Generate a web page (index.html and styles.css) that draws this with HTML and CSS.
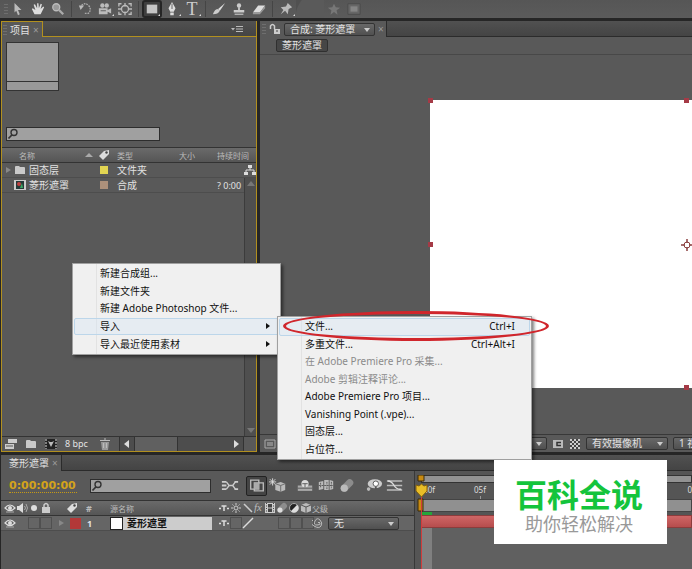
FILE: index.html
```
<!DOCTYPE html>
<html lang="zh-CN">
	<head>
		<meta charset="utf-8" />
		<title>菱形遮罩</title>
		<link rel="stylesheet" href="styles.css">
	</head>
	<body>
		<svg class="sprite" aria-hidden="true">
			<symbol id="i-search" viewBox="0 0 12 12"><circle cx="7" cy="4.5" r="3" fill="none" stroke="#333" stroke-width="1.4"/><path d="M4.8 7L1.5 10.500" stroke="#333" stroke-width="1.8"/></symbol>
			<symbol id="i-tag" viewBox="0 0 12 12"><path d="M1 7L6 2l5-1v4L5 11z" fill="#ddd"/><circle cx="8.500" cy="3.500" r="1.200" fill="#444"/></symbol>
			<symbol id="i-folder" viewBox="0 0 12 12"><path d="M1 3q0-1 1-1h3l1 1h4q1 0 1 1v6H1z" fill="#c9c9c9"/></symbol>
			<symbol id="i-eye" viewBox="0 0 12 12"><path d="M1 6q5-6 10 0q-5 5-10 0z" fill="none" stroke="#ddd" stroke-width="1.200"/><circle cx="6" cy="6" r="2" fill="#ddd"/><path d="M2 10h8" stroke="#aaa"/></symbol>
			<symbol id="i-shy" viewBox="0 0 12 12"><path d="M1 6.500h2m6 0h2M3.500 4h5M6 4v5" stroke="#ddd" stroke-width="1.500"/></symbol>
			<symbol id="i-cube" viewBox="0 0 12 12"><path d="M1 3l5-2 5 2v6l-5 2-5-2z" fill="#bbb"/><path d="M1 3l5 2 5-2M6 5v6" fill="none" stroke="#555"/></symbol>
			<symbol id="i-blur" viewBox="0 0 12 12"><path d="M4 8L8 4" stroke="#8d8d8d" stroke-width="6" stroke-linecap="round"/><circle cx="4" cy="8" r="2.500" fill="#ddd"/></symbol>
			<symbol id="i-film" viewBox="0 0 12 12"><path d="M1 1h10v10H1z" fill="#ccc"/><path d="M4 2h4v3.500H4zM4 6.500h4V10H4z" fill="#444"/><path d="M2.500 1v10m7-10v10" stroke="#444" stroke-dasharray="1 1.500"/></symbol>
		</svg>

		<header class="toolbar" role="toolbar" aria-label="工具">
			<i class="grip"></i>
			<button aria-label="选取"><svg viewBox="0 0 16 16"><path d="M4 1l8 8H8l2 5-2 1-2-5-2 2z" fill="#bbb"/></svg></button>
			<button aria-label="手形"><svg viewBox="0 0 16 16"><path d="M4 14L1 8l1-1 3 2L3 3l1.500-.5L7 7l0-5.500h1.500L9 7l2-5 1.500.5L11 8l3-3 1 1-4 8z" fill="#ddd"/></svg></button>
			<button aria-label="缩放"><svg viewBox="0 0 16 16"><circle cx="6" cy="6" r="4" fill="#999" stroke="#bbb" stroke-width="1.500"/><path d="M9 9l5 5" stroke="#aaa" stroke-width="2.500"/></svg></button>
			<i class="divider"></i>
			<button aria-label="旋转"><svg viewBox="0 0 16 16"><path d="M4 4q4-4 8 0t0 9H7" fill="none" stroke="#aaa" stroke-width="1.500" stroke-dasharray="2 1"/><path d="M1 4l6 0-4 5z" fill="#bbb"/></svg></button>
			<button class="more" aria-label="摄像机"><svg viewBox="0 0 16 16"><circle cx="5" cy="4" r="2.500" fill="#bbb"/><circle cx="10" cy="4" r="2.500" fill="#bbb"/><path d="M1 7h10v7H1zM11 9l4-2v6l-4-2z" fill="#bbb"/><path d="M3 10h6" stroke="#555"/></svg></button>
			<button aria-label="定位点"><svg viewBox="0 0 16 16"><circle cx="8" cy="8" r="4" fill="none" stroke="#bbb" stroke-width="1.500"/><path d="M1 5V2h3m8 0h3v3m0 6v3h-3M4 14H1v-3M0 8h4m8 0h4M8 1v4m0 6v4" fill="none" stroke="#bbb" stroke-width="1.500"/></svg></button>
			<i class="divider"></i>
			<button class="more is-active" aria-label="矩形遮罩"><svg viewBox="0 0 16 16"><path d="M2 3h12v10H2z" fill="#c4c4c4"/></svg></button>
			<button class="more" aria-label="钢笔"><svg viewBox="0 0 16 16"><path d="M8 0l4 7-2 4H6L4 7zM6 12h4v3H6z" fill="#ddd"/><path d="M8 2v6" stroke="#555"/></svg></button>
			<button class="more type-tool" aria-label="文字">T</button>
			<i class="divider"></i>
			<button aria-label="画笔"><svg viewBox="0 0 16 16"><path d="M15 1L7 8l2 2z" fill="#ddd"/><path d="M7 8q-4 0-6 6 6 0 8-4z" fill="#ccc"/></svg></button>
			<button aria-label="图章"><svg viewBox="0 0 16 16"><circle cx="8" cy="4" r="2.500" fill="#ccc"/><path d="M7 6h2v3h5v3H2V9h5z" fill="#ccc"/><path d="M3 14h10" stroke="#bbb" stroke-width="1.500"/></svg></button>
			<button aria-label="橡皮擦"><svg viewBox="0 0 16 16"><path d="M1 12l6-8h8l-6 8z" fill="#ddd"/><path d="M1 12h8l6-8v3l-6 7H1z" fill="#999"/></svg></button>
			<i class="divider"></i>
			<button class="more" aria-label="木偶"><svg viewBox="0 0 16 16"><path d="M2 6l6-1 2-4 5 5-4 2-1 6-3-4-5 4 3-5z" fill="#bbb"/></svg></button>
			<i class="curve"></i>
			<button disabled aria-label="收藏"><svg viewBox="0 0 16 16"><path d="M8 2l2 4 5 .5-4 3 1 5-4-3-4 3 1-5-4-3L6 6z" fill="#777"/></svg></button>
			<button disabled aria-label="边框"><svg viewBox="0 0 16 16"><path d="M1 2h14v12H1z" fill="#666" stroke="#494949"/><path d="M4 5h8v6H4z" fill="#858585"/></svg></button>
		</header>

		<main class="workspace">
			<section class="panel project" aria-label="项目">
				<div class="tabs">
					<h2 class="tab"><i class="grip"></i>项目<button class="close" aria-label="关闭">×</button></h2>
					<button class="panel-menu" aria-label="面板菜单"><svg viewBox="0 0 12 12"><path d="M0 5h4L2 7.500z" fill="#bbb"/><path d="M5 3.500h7M5 6h7M5 8.500h7" stroke="#bbb"/></svg></button>
				</div>
				<div class="project-top">
					<div class="thumb"></div>
					<label class="search"><svg><use href="#i-search"/></svg><input type="text" aria-label="搜索项目"></label>
				</div>
				<div class="project-list">
					<table class="items">
						<colgroup><col class="c-name"><col class="c-tag"><col class="c-type"><col class="c-size"><col></colgroup>
						<thead>
							<tr><th>名称<i class="sort"></i></th><th><svg class="icon"><use href="#i-tag"/></svg></th><th>类型</th><th>大小</th><th>持续时间</th></tr>
						</thead>
						<tbody>
							<tr>
								<td><span class="item"><i class="twirl"></i><svg class="icon"><use href="#i-folder"/></svg>固态层</span></td>
								<td><i class="swatch yellow"></i></td><td>文件夹</td><td></td>
								<td><svg class="flow" viewBox="0 0 12 12"><path d="M4 1h4v3H4zM0 8h4v3H0zM8 8h4v3H8z" fill="#ddd"/><path d="M6 4v2M2 8V6h8v2" fill="none" stroke="#ddd"/></svg></td>
							</tr>
							<tr>
								<td><span class="item"><i class="twirl blank"></i><svg class="icon" viewBox="0 0 12 12"><path d="M0 1h12v10H0z" fill="#ccc"/><path d="M2 2h8v8H2z" fill="#253a39"/><circle cx="5" cy="5" r="2" fill="#c14040"/><path d="M6 9l2-5 1 5z" fill="#3aa763"/></svg>菱形遮罩</span></td>
								<td><i class="swatch tan"></i></td><td>合成</td><td></td><td class="time">? 0:00</td>
							</tr>
						</tbody>
					</table>
					<i class="scrollbar"></i>
				</div>
				<footer class="project-foot">
					<button aria-label="解释素材"><svg viewBox="0 0 12 12"><path d="M3 1h9v4H3zM0 6h9v5H0z" fill="#ccc"/><path d="M1 8h7" stroke="#555"/></svg></button>
					<button aria-label="新建文件夹"><svg><use href="#i-folder"/></svg></button>
					<button aria-label="新建合成"><svg viewBox="0 0 12 12"><path d="M0 1h12v10H0z" fill="#222"/><path d="M1 1v10M11 1v10" stroke="#ddd" stroke-dasharray="2 1"/><path d="M3 3l3 6 3-6-2 1H5z" fill="#bbb"/></svg></button>
					<button class="bpc">8 bpc</button>
					<button aria-label="删除"><svg viewBox="0 0 12 12"><path d="M2 4h8l-1 8H3z" fill="#999"/><path d="M1 2.500h10M5 1h2M4.500 5v5m3-5v5" stroke="#bbb"/></svg></button>
					<div class="hscroll"><i class="arrow left"></i><i class="knob"></i><i class="arrow right"></i></div>
				</footer>
			</section>

			<section class="panel viewer" aria-label="合成">
				<div class="tabs">
					<div class="tab">
						<i class="grip"></i>
						<svg class="icon" viewBox="0 0 12 12"><path d="M5 6h6v5H5z" fill="#ccc"/><path d="M1.500 6V3q2-3 4 0v3" fill="none" stroke="#ccc" stroke-width="1.500"/><path d="M8 7v2" stroke="#444"/></svg>
						<span class="drop comp-drop"><select aria-label="合成"><option>合成: 菱形遮罩</option></select></span>
						<button class="close" aria-label="关闭">×</button>
					</div>
				</div>
				<nav class="crumbs"><button>菱形遮罩</button></nav>
				<div class="canvas">
					<div class="frame">
						<i class="handle tl"></i><i class="handle tc"></i><i class="handle ml"></i><i class="handle bl"></i><i class="handle bc"></i>
						<svg class="anchor" viewBox="0 0 12 12"><circle cx="6" cy="6" r="3" fill="none" stroke="#8b4040"/><path d="M6 0v4M6 8v4M0 6h4M8 6h4" stroke="#8b4040" stroke-width="1.500"/></svg>
					</div>
				</div>
				<footer class="viewer-foot">
					<svg class="icon" viewBox="0 0 12 12"><path d="M1 2h10v8H1z" fill="none" stroke="#aaa"/><path d="M3 4h6v4H3z" fill="#888"/></svg>
					<span class="drop res-drop"><select aria-label="分辨率"><option></option></select></span>
					<button aria-label="目标区域"><svg viewBox="0 0 12 12"><path d="M1 2h10v8H1z" fill="#bbb"/><path d="M9 4.500H5v3h4" fill="none" stroke="#333" stroke-width="1.500"/></svg></button>
					<button aria-label="透明网格"><svg viewBox="0 0 12 12"><path d="M1 1h10v10H1z" fill="#444"/><path d="M1 2h10m-10 4h10m-10 4h10" stroke="#ccc" stroke-width="2" stroke-dasharray="2 2"/><path d="M3 4h8m-8 4h8" stroke="#ccc" stroke-width="2" stroke-dasharray="2 2"/></svg></button>
					<span class="drop cam-drop"><select aria-label="视图"><option>有效摄像机</option></select></span>
					<span class="drop view-drop"><select aria-label="视图数"><option>1 视图</option></select></span>
				</footer>
			</section>
		</main>

		<section class="panel timeline" aria-label="时间线">
			<div class="tabs">
				<h2 class="tab">菱形遮罩<button class="close" aria-label="关闭">×</button></h2>
			</div>
			<div class="timeline-body">
				<div class="layers">
					<div class="controls">
						<button class="timecode">0:00:00:00</button>
						<label class="search"><svg><use href="#i-search"/></svg><input type="text" aria-label="搜索图层"></label>
						<div class="modes">
							<button aria-label="流程图"><svg viewBox="0 0 20 16"><path d="M1 3h5v2H1zM1 7h5v2H1zM1 11h5v2H1zM15 3h4v2h-4zM15 11h4v2h-4z" fill="#ccc"/><path d="M6 4l3 4h4l3-4M9 8l-3 4m7-4l3 4" fill="none" stroke="#ccc" stroke-width="1.500"/></svg></button>
							<button class="is-active" aria-label="实时更新"><svg viewBox="0 0 20 16"><path d="M3 2h9v10H3zM7 5h10v9H7z" fill="none" stroke="#bbb" stroke-width="1.500"/><path d="M7 5h5v7H7z" fill="#aaa"/></svg></button>
							<button aria-label="草图 3D"><svg viewBox="0 0 20 16"><path d="M7 6l6-2 5 2v7l-5 2-6-2z" fill="#bbb"/><path d="M7 6l6 2 5-2m-5 2v7" fill="none" stroke="#666"/><path d="M4 0v8M0 4h8M1 1l6 6M7 1L1 7" stroke="#ddd"/></svg></button>
							<button class="gap" aria-label="隐藏图层"><svg viewBox="0 0 20 16"><path d="M2 8h16v6H2z" fill="#aaa"/><circle cx="10" cy="6" r="4" fill="#ddd"/><path d="M7 6h6M10 6v4M2 11h16" stroke="#555"/></svg></button>
							<button aria-label="帧混合"><svg viewBox="0 0 20 16"><path d="M2 4l5-1v9l-5 1zM8 2h5v11H8zM14 2l4 1v9l-4 1z" fill="#bbb"/><path d="M4 5v6m7-7v8m5-8v7M2 8h16" stroke="#555" stroke-dasharray="2 1"/></svg></button>
							<button aria-label="运动模糊"><svg viewBox="0 0 20 16"><path d="M7 11l6-6" stroke="#8c8c8c" stroke-width="8" stroke-linecap="round"/><circle cx="7" cy="11" r="4" fill="#bbb"/></svg></button>
							<button class="gap" aria-label="头脑风暴"><svg viewBox="0 0 20 16"><ellipse cx="11" cy="6" rx="8" ry="5" fill="#ccc"/><circle cx="4" cy="12" r="2" fill="#bbb"/><circle cx="12" cy="6" r="3" fill="#fff" stroke="#555"/><path d="M11 9h2v3h-2z" fill="#555"/></svg></button>
							<button aria-label="图形编辑器"><svg viewBox="0 0 20 16"><path d="M1 3h17M1 8h17M1 13h17" stroke="#bbb" stroke-width="1.500"/><path d="M2 3q4 0 7 5t8 4" fill="none" stroke="#ddd" stroke-width="1.500"/></svg></button>
						</div>
					</div>
					<table class="layer-table">
						<colgroup><col class="l-av"><col class="l-label"><col class="l-name"><col class="l-switch"><col></colgroup>
						<thead>
							<tr>
								<th><span class="cells"><svg><use href="#i-eye"/></svg><svg viewBox="0 0 12 12"><path d="M1 4h2l4-3v10L3 8H1z" fill="#ddd"/><path d="M8.500 4q2 2 0 4M10 2q3 4 0 8" fill="none" stroke="#aaa"/></svg><svg viewBox="0 0 12 12"><circle cx="6" cy="6" r="3" fill="#ddd"/></svg><svg viewBox="0 0 12 12"><path d="M2 5h8v6H2z" fill="#ccc"/><path d="M4 5V3q2-3 4 0v2" fill="none" stroke="#ccc" stroke-width="1.500"/></svg></span></th>
								<th><span class="cells label-cells"><svg><use href="#i-tag"/></svg><b>#</b></span></th>
								<th>源名称</th>
								<th><span class="cells"><svg><use href="#i-shy"/></svg><svg viewBox="0 0 12 12"><circle cx="6" cy="6" r="2" fill="none" stroke="#ccc"/><path d="M6 1v2m0 6v2M1 6h2m6 0h2M2.500 2.500l1 1m5 5l1 1m0-7l-1 1m-5 5l-1 1" stroke="#ccc"/></svg><svg viewBox="0 0 12 12"><path d="M2 2l8 8" stroke="#ccc" stroke-width="1.500"/></svg><em>fx</em><svg><use href="#i-film"/></svg><svg><use href="#i-blur"/></svg><svg viewBox="0 0 12 12"><circle cx="6" cy="6" r="4.500" fill="#222" stroke="#aaa"/><path d="M9.200 2.800L2.800 9.200A4.500 4.500 0 0 0 9.200 2.800z" fill="#ddd"/></svg><svg><use href="#i-cube"/></svg></span></th>
								<th>父级</th>
							</tr>
						</thead>
						<tbody>
							<tr>
								<td><span class="cells"><svg><use href="#i-eye"/></svg><i class="blank"></i><i class="box"></i><i class="box"></i></span></td>
								<td><span class="cells layer-label"><i class="twirl"></i><i class="swatch red"></i><b>1</b></span></td>
								<td><span class="layer-name"><i class="solid"></i><strong>菱形遮罩</strong></span></td>
								<td><span class="cells"><svg><use href="#i-shy"/></svg><i class="box"></i><svg viewBox="0 0 12 12"><path d="M1 11L11 1" stroke="#ddd" stroke-width="1.500"/></svg><i class="blank"></i><i class="blank"></i><i class="box"></i><i class="box"></i><i class="box"></i></span></td>
								<td><span class="parent"><svg viewBox="0 0 12 12"><path d="M6 6q1-2 2 0t-3 2-2-4 5-1 1 6-7 0-1-6" fill="none" stroke="#bbb"/></svg><span class="drop parent-drop"><select aria-label="父级"><option>无</option></select></span></span></td>
							</tr>
						</tbody>
					</table>
				</div>
				<div class="time-area">
					<div class="navigator"></div>
					<div class="ruler"><span>:00f</span><span class="tick">05f</span><span class="last">0</span></div>
					<div class="work-area"></div>
					<div class="cache"></div>
					<div class="bar"></div>
					<div class="track"></div>
					<svg class="playhead" viewBox="0 0 13 94" preserveAspectRatio="xMidYMin slice"><path d="M3 0h6v6H3zM3 24h5v12H3z" fill="#c78a12" stroke="#3a2a08"/><path d="M6.500 20v74" stroke="#d23c3c"/><path d="M1 10l3 1 2.500-2L9 11l3-1v6l-5.500 6L1 16z" fill="#e8bd26" stroke="#805f10"/></svg>
				</div>
			</div>
		</section>

		<div class="menu menu-main" role="menu">
			<button role="menuitem">新建合成组...</button>
			<button role="menuitem">新建文件夹</button>
			<button role="menuitem">新建 Adobe Photoshop 文件...</button>
			<button role="menuitem" class="hover sub">导入</button>
			<button role="menuitem" class="sub">导入最近使用素材</button>
		</div>
		<div class="menu menu-import" role="menu">
			<button role="menuitem" class="hover">文件...<kbd>Ctrl+I</kbd></button>
			<button role="menuitem">多重文件...<kbd>Ctrl+Alt+I</kbd></button>
			<button role="menuitem" disabled>在 Adobe Premiere Pro 采集...</button>
			<button role="menuitem" disabled>Adobe 剪辑注释评论...</button>
			<button role="menuitem">Adobe Premiere Pro 项目...</button>
			<button role="menuitem">Vanishing Point (.vpe)...</button>
			<button role="menuitem">固态层...</button>
			<button role="menuitem">占位符...</button>
		</div>
		<div class="marker"></div>
		<aside class="brand"><strong>百科全说</strong><span>助你轻松解决</span></aside>
	</body>
</html>
```
FILE: styles.css
```
html, body {
	margin: 0;
	height: 100%;
	overflow: hidden;
}
*, *::before, *::after {
	box-sizing: border-box;
}
body {
	display: flex;
	flex-direction: column;
	gap: 3px;
	background: #262626;
	color: #e2e2e2;
	font: 10px/14px "Noto Sans", "Noto Sans CJK SC", sans-serif;
}
button, input, select {
	margin: 0;
	padding: 0;
	border: 0;
	background: none;
	color: inherit;
	font: inherit;
}
svg, i {
	display: block;
	flex: none;
}
.sprite {
	position: absolute;
	width: 0;
	height: 0;
}
.icon {
	width: 12px;
	height: 12px;
}
.grip {
	width: 4px;
	height: 12px;
	background: radial-gradient(#888 30%, transparent 40%) 0 0 / 2px 3px;
}

/* toolbar */
.toolbar {
	display: flex;
	align-items: center;
	flex: none;
	height: 18px;
	padding-left: 4px;
	background: linear-gradient(#565656, #5b5b5b);
}
.toolbar button {
	position: relative;
	flex: none;
	width: 20px;
	height: 18px;
}
.toolbar svg {
	width: 14px;
	height: 14px;
	margin: 0 auto;
}
.toolbar .divider {
	width: 1px;
	height: 16px;
	margin: 0 3px;
	background: #454545;
}
.toolbar .more::after {
	content: "";
	position: absolute;
	right: 1px;
	bottom: 2px;
	border: 1px solid #ddd;
	border-top-color: transparent;
	border-left-color: transparent;
}
.toolbar .is-active {
	border: 2px solid #252525;
	border-radius: 3px;
	background: #3e3e3e;
}
.toolbar .is-active::after {
	right: 0;
	bottom: 0;
}
.toolbar .type-tool {
	font: 18px/18px "Liberation Serif", serif;
	color: #ccc;
}
.curve {
	width: 28px;
	height: 18px;
	background: radial-gradient(circle at 100% 100%, #5a5a5a 28px, #505050 29px);
}

/* panels */
.workspace {
	display: flex;
	flex: 1;
	gap: 3px;
	min-height: 0;
}
.panel {
	display: flex;
	flex-direction: column;
	background: #595959;
}
.tabs {
	display: flex;
	justify-content: space-between;
	flex: none;
	height: 16px;
	border-bottom: 1px solid #2b2b2b;
	background: linear-gradient(#515151, #444);
}
.tab {
	display: flex;
	align-items: center;
	gap: 3px;
	height: 16px;
	margin: 0;
	padding: 0 3px;
	border-right: 1px solid #2b2b2b;
	background: #595959;
	font-size: 10px;
	font-weight: 400;
}
.close {
	color: #999;
}
.drop {
	position: relative;
	display: block;
	height: 13px;
	border: 1px solid #333;
	border-radius: 2px;
	background: linear-gradient(#686868, #505050);
}
.drop::after {
	content: "";
	position: absolute;
	right: 4px;
	top: 4px;
	border: 3px solid transparent;
	border-top: 4px solid #ccc;
	border-bottom: 0;
	pointer-events: none;
}
.drop select {
	display: block;
	width: 100%;
	height: 11px;
	padding-left: 5px;
	line-height: 11px;
	appearance: none;
}
.search {
	display: flex;
	align-items: center;
	height: 14px;
	border: 1px solid #2d2d2d;
	background: #a0a0a0;
}
.search svg {
	width: 12px;
	height: 12px;
}
.search input {
	flex: 1;
	min-width: 0;
	height: 12px;
	outline: 0;
	color: #222;
}
.swatch {
	width: 8px;
	height: 8px;
}
.yellow { background: #e2d552; }
.tan { background: #ad917b; }
.red { background: #b33838; }
.twirl {
	width: 5px;
	border: 3px solid transparent;
	border-left: 5px solid #888;
	border-right: 0;
}
.twirl.blank {
	border-color: transparent;
}

/* project */
.project {
	flex: none;
	width: 256px;
	margin-left: 1px;
	border: 1px solid #b2901f;
	border-top: 0;
}
.project .tabs {
	border-bottom-color: #b2901f;
}
.project .tab {
	padding-left: 1px;
	border-top: 1px solid #b2901f;
	border-right-color: #b2901f;
}
.panel-menu {
	padding-right: 13px;
}
.panel-menu svg {
	width: 12px;
	height: 12px;
}
.project-top {
	flex: none;
	padding: 5px 4px 6px;
}
.thumb {
	width: 53px;
	height: 49px;
	border: 1px solid #333;
	background: linear-gradient(#999 38px, #333 38px, #333 39px, #999 39px);
}
.project-top .search {
	width: 154px;
	margin-top: 36px;
}
.project-list {
	display: flex;
	flex: 1;
	position: relative;
	align-items: flex-start;
	min-height: 0;
}
.items, .layer-table {
	width: 100%;
	table-layout: fixed;
	border-collapse: collapse;
}
.items th, .items td, .layer-table th, .layer-table td {
	height: 15px;
	padding: 0;
	text-align: left;
	font-weight: 400;
	line-height: 13px;
	white-space: nowrap;
	border-bottom: 1px solid #4d4d4d;
}
.items thead, .layer-table thead {
	background: linear-gradient(#6a6a6a, #545454);
	color: #bbb;
}
.items th, .layer-table th {
	font-size: 8px;
	border-top: 1px solid #333;
	border-bottom: 1px solid #333;
}
.items th:first-child {
	padding-left: 17px;
}
.sort {
	float: right;
	margin: 4px 5px;
	border: 4px solid transparent;
	border-bottom: 4px solid #aaa;
	border-top: 0;
}
.c-name { width: 96px; }
.c-tag { width: 19px; }
.c-type { width: 62px; }
.c-size { width: 38px; }
.items .swatch {
	margin-left: 2px;
}
.item {
	display: flex;
	align-items: center;
	gap: 3px;
	padding-left: 4px;
}
.items .time {
	font-size: 9px;
}
.flow {
	width: 12px;
	height: 12px;
	margin-left: 27px;
}
.scrollbar {
	position: absolute;
	top: 31px;
	right: 0;
	bottom: 0;
	width: 12px;
	border-left: 1px solid #3c3c3c;
	background: #4f4f4f;
}
.scrollbar::before, .scrollbar::after {
	content: "";
	position: absolute;
	left: 2px;
	top: 3px;
	border: 4px solid transparent;
	border-bottom: 5px solid #777;
	border-top: 0;
}
.scrollbar::after {
	top: auto;
	bottom: 3px;
	border-top: 5px solid #777;
	border-bottom: 0;
}
.project-foot {
	display: flex;
	align-items: center;
	gap: 8px;
	flex: none;
	height: 15px;
	padding-left: 3px;
	border-top: 1px solid #333;
}
.project-foot svg {
	width: 12px;
	height: 12px;
}
.bpc {
	width: 26px;
	font-size: 9px;
	text-align: left;
	white-space: nowrap;
}
.hscroll {
	display: flex;
	align-items: center;
	flex: 1;
	height: 14px;
	margin-right: 12px;
	padding: 0 4px;
	border: solid #333;
	border-width: 0 1px;
	background: #4d4d4d;
}
.arrow {
	border: 4px solid transparent;
}
.arrow.left {
	border-right: 5px solid #ddd;
	border-left: 0;
}
.arrow.right {
	margin-left: auto;
	border-left: 5px solid #ddd;
	border-right: 0;
}
.knob {
	width: 44px;
	height: 14px;
	margin-left: 5px;
	border: solid #333;
	border-width: 0 1px;
	background: #606060;
}

/* composition viewer */
.viewer {
	flex: 1;
	min-width: 0;
}
.viewer .tab {
	padding: 0 2px;
}
.comp-drop {
	width: 91px;
}
.crumbs {
	flex: none;
	height: 18px;
	padding: 2px 16px;
	border-bottom: 1px solid #484848;
}
.crumbs button {
	display: block;
	width: 52px;
	height: 13px;
	border: 1px solid #303030;
	border-radius: 2px;
	background: #464646;
	line-height: 11px;
}
.canvas {
	flex: 1;
	min-height: 0;
	padding: 45px 0 46px 170px;
}
.frame {
	position: relative;
	height: 100%;
	background: #fff;
}
.handle {
	position: absolute;
	width: 5px;
	height: 5px;
	background: #a53a46;
}
.tl { left: -2px; top: -2px; }
.tc { left: 254px; top: -2px; }
.ml { left: -2px; top: 142px; }
.bl { left: -2px; bottom: -2px; }
.bc { left: 254px; bottom: -2px; }
.anchor {
	position: absolute;
	left: 251px;
	top: 139px;
	width: 12px;
	height: 12px;
}
.viewer-foot {
	display: flex;
	align-items: center;
	gap: 5px;
	flex: none;
	height: 18px;
	padding-left: 4px;
	border-top: 1px solid #383838;
	overflow: hidden;
}
.viewer-foot button svg {
	width: 12px;
	height: 12px;
}
.viewer-foot .drop {
	flex: none;
}
.viewer-foot .res-drop {
	width: 266px;
}
.viewer-foot .cam-drop { width: 82px; }
.viewer-foot .view-drop { width: 60px; }

/* timeline */
.timeline {
	flex: none;
	height: 114px;
	margin-left: 1px;
}
.timeline .tab {
	padding-left: 8px;
}
.timeline-body {
	display: flex;
	flex: 1;
	min-height: 0;
}
.layers {
	flex: none;
	width: 414px;
	border-right: 1px solid #383838;
}
.controls {
	display: flex;
	align-items: center;
	height: 29px;
	padding-left: 8px;
}
.timecode {
	width: 68px;
	border-bottom: 1px dotted #c79a16;
	color: #d3a31b;
	font: bold 11px/13px "DejaVu Sans", sans-serif;
	text-align: left;
}
.controls .search {
	width: 121px;
	margin-left: 13px;
}
.modes {
	display: flex;
	align-items: center;
	margin-left: 8px;
}
.modes button {
	width: 21px;
	height: 20px;
}
.modes svg {
	width: 18px;
	height: 15px;
	margin: 0 auto;
}
.modes .is-active {
	margin-left: 6px;
	border: 1px solid #222;
	border-radius: 2px;
	background: #444;
}
.modes .gap {
	margin-left: 6px;
}
.l-av { width: 54px; }
.l-label { width: 55px; }
.l-name { width: 105px; }
.l-switch { width: 97px; }
.layer-table tbody {
	background: #656565;
}
.cells {
	display: flex;
	align-items: center;
	padding-left: 3px;
}
.cells svg, .cells > .blank, .cells > .box, .cells em {
	width: 12px;
	height: 12px;
}
.cells .box {
	border: 1px solid #505050;
}
.cells em {
	font: italic 11px/11px "Liberation Serif", serif;
}
.cells b {
	font-size: 9px;
}
.label-cells {
	gap: 8px;
	padding-left: 11px;
}
.layer-label {
	gap: 6px;
	padding-left: 4px;
}
.layer-label .swatch {
	width: 11px;
	height: 11px;
}
.layer-name {
	display: flex;
	width: 102px;
	background: #ccc;
	color: #111;
}
.solid {
	width: 13px;
	height: 13px;
	border: 1px solid #222;
	background: #fff;
}
.layer-name strong {
	padding-left: 4px;
	font-weight: 700;
}
.parent {
	display: flex;
	align-items: center;
	gap: 4px;
}
.parent svg {
	width: 12px;
	height: 12px;
}
.parent-drop {
	width: 71px;
}
.time-area {
	position: relative;
	flex: 1;
	display: flex;
	flex-direction: column;
	min-width: 0;
	padding-left: 6px;
	background: #555;
}
.navigator {
	height: 8px;
	margin-top: 4px;
	border: 1px solid #333;
	background: #929292;
}
.ruler {
	display: flex;
	height: 16px;
	overflow: hidden;
	color: #ddd;
	font-size: 8px;
}
.ruler span {
	flex: none;
	width: 53px;
	line-height: 13px;
}
.ruler .tick {
	background: linear-gradient(#999, #999) 6px 100% / 1px 3px no-repeat;
}
.ruler .last {
	width: auto;
	margin-left: auto;
}
.work-area {
	height: 13px;
	border: 1px solid #444;
	background: #909090;
}
.cache {
	width: 11px;
	height: 3px;
	background: #26a53a;
}
.bar {
	height: 13px;
	border: 1px solid #8c3c3c;
	background: linear-gradient(#cf6666, #b64d4d);
}
.track {
	flex: 1;
	background: linear-gradient(90deg, #808080 11px, #606060 11px);
}
.playhead {
	position: absolute;
	left: 0;
	top: 4px;
	width: 13px;
	height: 94px;
}

/* popup menus */
.menu {
	position: absolute;
	display: grid;
	grid-auto-rows: 1fr;
	padding: 1px;
	border: 1px solid #a0a0a0;
	background: linear-gradient(90deg, #f0f0f0 23px, #e2e2e2 23px, #e2e2e2 24px, #f0f0f0 24px);
	box-shadow: 2px 2px 3px rgba(0, 0, 0, .5);
	color: #111;
}
.menu button {
	display: flex;
	align-items: center;
	padding: 0 14px 1px 25px;
	border: 1px solid transparent;
	border-radius: 2px;
	line-height: 14px;
}
.menu .hover {
	border-color: #bcd6ea;
	background: rgba(210, 230, 248, .3);
}
.menu button:disabled {
	color: #8b8b8b;
}
.menu kbd {
	margin-left: auto;
	font: inherit;
}
.menu .sub {
	padding-right: 8px;
}
.menu .sub::after {
	content: "";
	margin-left: auto;
	border: 3px solid transparent;
	border-left: 4px solid #111;
	border-right: 0;
}
.menu-main {
	left: 72px;
	top: 263px;
	width: 209px;
	height: 92px;
}
.menu-import {
	left: 277px;
	top: 316px;
	width: 255px;
	height: 144px;
}
.marker {
	position: absolute;
	left: 283px;
	top: 311px;
	width: 266px;
	height: 30px;
	border: 3px solid #d0262c;
	border-radius: 50%;
	pointer-events: none;
}
.brand {
	position: absolute;
	left: 494px;
	top: 460px;
	display: flex;
	flex-direction: column;
	align-items: center;
	justify-content: center;
	width: 173px;
	height: 84px;
	padding: 5px 3px 0 0;
	background: #fff;
	color: #999;
	font-size: 18px;
	line-height: 24px;
	font-family: "Noto Sans CJK SC", sans-serif;
}
.brand strong {
	color: #14c43c;
	font-size: 32px;
	line-height: 36px;
}
```
